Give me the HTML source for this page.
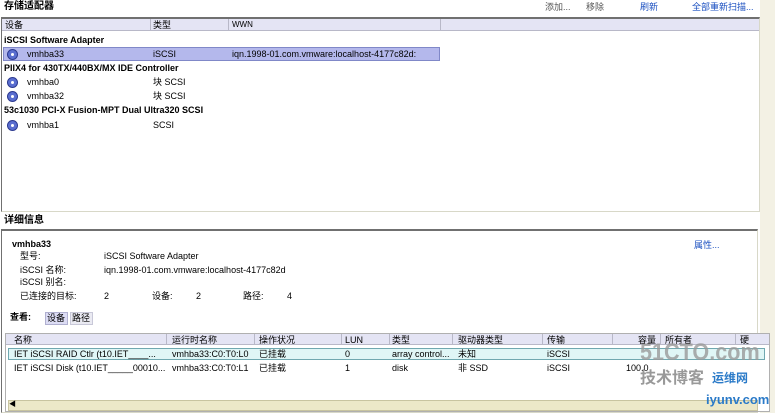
<!DOCTYPE html>
<html><head><meta charset="utf-8"><style>
*{margin:0;padding:0;box-sizing:border-box}
body{width:775px;height:413px;background:#fff;position:relative;overflow:hidden;font-family:"Liberation Sans","Noto Sans CJK SC",sans-serif;font-size:9px;color:#000}
.a{position:absolute;white-space:nowrap;line-height:12px}
.b{font-weight:bold}
.ic{position:absolute;width:11px;height:11px;border-radius:50%;background:#5a6ed0;border:1px solid #2c3a90}
.ic:after{content:"";position:absolute;left:3px;top:3px;width:3px;height:3px;border-radius:50%;background:#fff}
.vl{position:absolute;width:1px;background:#b8b8c8}
</style></head><body>
<div style="position:absolute;left:760px;top:0;width:15px;height:413px;background:#f3f1e4"></div>
<div class="a b" style="left:4px;top:1px;font-size:10px">存储适配器</div>
<div class="a" style="left:545px;top:1px;color:#555">添加...</div>
<div class="a" style="left:586px;top:1px;color:#555">移除</div>
<div class="a" style="left:640px;top:1px;color:#1a4fc0">刷新</div>
<div class="a" style="left:692px;top:1px;color:#1a4fc0">全部重新扫描...</div>

<div style="position:absolute;left:1px;top:17px;width:759px;height:195px;border:1px solid #d8d8c8;border-top:2px solid #707070;border-left:1px solid #707070;background:#fff"></div>
<div style="position:absolute;left:2px;top:19px;width:757px;height:12px;background:#e4e4f4;border-bottom:1px solid #b8b8c8"></div>
<div class="vl" style="left:150px;top:19px;height:12px"></div>
<div class="vl" style="left:228px;top:19px;height:12px"></div>
<div class="vl" style="left:440px;top:19px;height:12px"></div>
<div class="a" style="left:5px;top:19px">设备</div>
<div class="a" style="left:153px;top:19px">类型</div>
<div class="a" style="left:232px;top:19px;font-size:8px">WWN</div>

<div class="a b" style="left:4px;top:34px">iSCSI Software Adapter</div>
<div style="position:absolute;left:3px;top:47px;width:437px;height:14px;background:#b4b8ec;border:1px solid #8088c8"></div>
<div class="ic" style="left:7px;top:49px"></div>
<div class="a" style="left:27px;top:48px">vmhba33</div>
<div class="a" style="left:153px;top:48px">iSCSI</div>
<div class="a" style="left:232px;top:48px">iqn.1998-01.com.vmware:localhost-4177c82d:</div>
<div class="a b" style="left:4px;top:62px">PIIX4 for 430TX/440BX/MX IDE Controller</div>
<div class="ic" style="left:7px;top:77px"></div>
<div class="a" style="left:27px;top:76px">vmhba0</div>
<div class="a" style="left:153px;top:76px">块 SCSI</div>
<div class="ic" style="left:7px;top:91px"></div>
<div class="a" style="left:27px;top:90px">vmhba32</div>
<div class="a" style="left:153px;top:90px">块 SCSI</div>
<div class="a b" style="left:4px;top:104px">53c1030 PCI-X Fusion-MPT Dual Ultra320 SCSI</div>
<div class="ic" style="left:7px;top:120px"></div>
<div class="a" style="left:27px;top:119px">vmhba1</div>
<div class="a" style="left:153px;top:119px">SCSI</div>

<div class="a b" style="left:4px;top:215px;font-size:10px">详细信息</div>
<div style="position:absolute;left:1px;top:229px;width:757px;height:184px;border:1px solid #d8d8c8;border-top:2px solid #707070;border-left:1px solid #707070;background:#fff"></div>
<div class="a b" style="left:12px;top:238px">vmhba33</div>
<div class="a" style="left:20px;top:250px">型号:</div>
<div class="a" style="left:104px;top:250px">iSCSI Software Adapter</div>
<div class="a" style="left:20px;top:264px">iSCSI 名称:</div>
<div class="a" style="left:104px;top:264px">iqn.1998-01.com.vmware:localhost-4177c82d</div>
<div class="a" style="left:20px;top:276px">iSCSI 别名:</div>
<div class="a" style="left:20px;top:290px">已连接的目标:</div>
<div class="a" style="left:104px;top:290px">2</div>
<div class="a" style="left:152px;top:290px">设备:</div>
<div class="a" style="left:196px;top:290px">2</div>
<div class="a" style="left:243px;top:290px">路径:</div>
<div class="a" style="left:287px;top:290px">4</div>
<div class="a" style="left:694px;top:239px;color:#1a4fc0">属性...</div>
<div class="a b" style="left:10px;top:311px">查看:</div>
<div style="position:absolute;left:45px;top:312px;width:23px;height:13px;background:#dcdcf4;border:1px solid #b0b0d0"></div>
<div class="a" style="left:47px;top:312px">设备</div>
<div style="position:absolute;left:70px;top:312px;width:23px;height:13px;background:#eaeaf2;border:1px solid #c8c8d8"></div>
<div class="a" style="left:72px;top:312px">路径</div>

<div style="position:absolute;left:5px;top:333px;width:765px;height:79px;border:1px solid #b0b0b0;background:#fff"></div>
<div style="position:absolute;left:6px;top:334px;width:763px;height:11px;background:#e4e4f4;border-bottom:1px solid #b8b8c8"></div>
<div class="vl" style="left:166px;top:334px;height:11px"></div>
<div class="vl" style="left:254px;top:334px;height:11px"></div>
<div class="vl" style="left:341px;top:334px;height:11px"></div>
<div class="vl" style="left:389px;top:334px;height:11px"></div>
<div class="vl" style="left:452px;top:334px;height:11px"></div>
<div class="vl" style="left:542px;top:334px;height:11px"></div>
<div class="vl" style="left:612px;top:334px;height:11px"></div>
<div class="vl" style="left:660px;top:334px;height:11px"></div>
<div class="vl" style="left:735px;top:334px;height:11px"></div>
<div class="a" style="left:14px;top:334px">名称</div>
<div class="a" style="left:172px;top:334px">运行时名称</div>
<div class="a" style="left:259px;top:334px">操作状况</div>
<div class="a" style="left:345px;top:334px">LUN</div>
<div class="a" style="left:392px;top:334px">类型</div>
<div class="a" style="left:458px;top:334px">驱动器类型</div>
<div class="a" style="left:547px;top:334px">传输</div>
<div class="a" style="left:638px;top:334px">容量</div>
<div class="a" style="left:665px;top:334px">所有者</div>
<div class="a" style="left:740px;top:334px">硬</div>
<div style="position:absolute;left:8px;top:348px;width:757px;height:12px;background:#e0f6f6;border:1px solid #70a8b0"></div>
<div class="a" style="left:14px;top:348px">IET iSCSI RAID Ctlr (t10.IET____...</div>
<div class="a" style="left:172px;top:348px">vmhba33:C0:T0:L0</div>
<div class="a" style="left:259px;top:348px">已挂载</div>
<div class="a" style="left:345px;top:348px">0</div>
<div class="a" style="left:392px;top:348px">array control...</div>
<div class="a" style="left:458px;top:348px">未知</div>
<div class="a" style="left:547px;top:348px">iSCSI</div>
<div class="a" style="left:14px;top:362px">IET iSCSI Disk (t10.IET_____00010...</div>
<div class="a" style="left:172px;top:362px">vmhba33:C0:T0:L1</div>
<div class="a" style="left:259px;top:362px">已挂载</div>
<div class="a" style="left:345px;top:362px">1</div>
<div class="a" style="left:392px;top:362px">disk</div>
<div class="a" style="left:458px;top:362px">非 SSD</div>
<div class="a" style="left:547px;top:362px">iSCSI</div>
<div class="a" style="left:626px;top:362px">100.0</div>
<div style="position:absolute;left:8px;top:400px;width:750px;height:11px;background:#ece8c8;border:1px solid #c8c4a0"></div>
<div class="a" style="left:9px;top:399px;font-size:7px">◀</div>
<div class="a b" style="left:640px;top:340px;font-size:24px;line-height:26px;color:#9a9a9a;opacity:.8;transform:scaleX(.9);transform-origin:left">51CTO.com</div>
<div class="a b" style="left:640px;top:370px;font-size:16px;line-height:18px;color:#999">技术博客</div>
<div class="a b" style="left:712px;top:372px;font-size:12px;color:#2a7ac8">运维网</div>
<div class="a b" style="left:706px;top:392px;font-size:13px;line-height:16px;color:#2a7ac8">iyunv.com</div>
</body></html>
